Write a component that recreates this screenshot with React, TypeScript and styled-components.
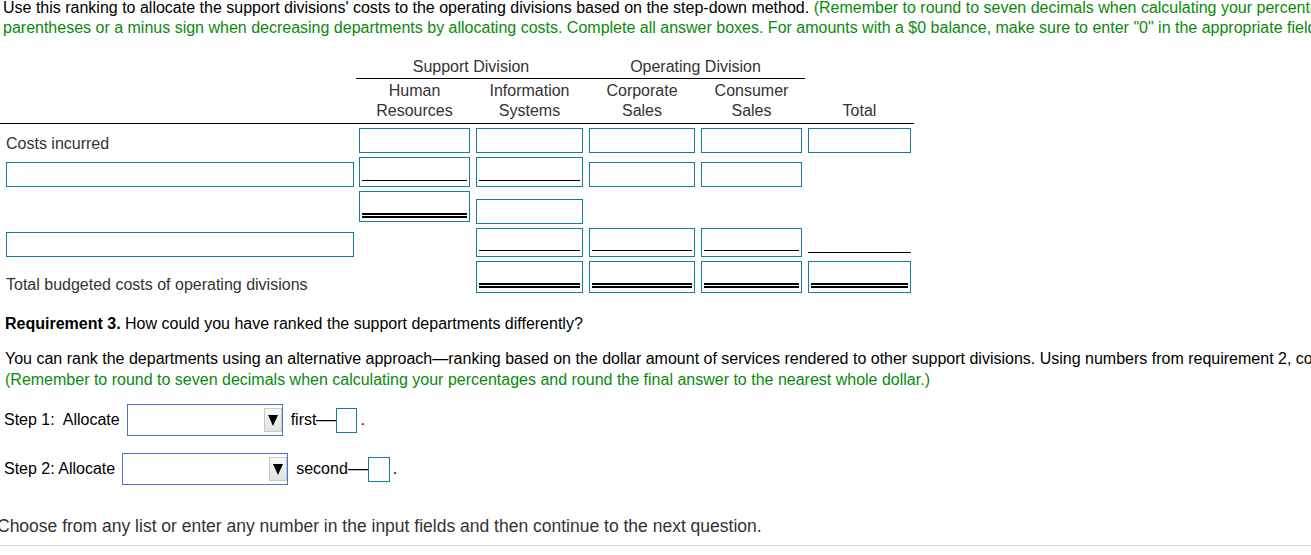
import React from 'react';
import styled, { createGlobalStyle } from 'styled-components';

const teal = '#147d99';
const cols = '356px 117px 113px 112px 107px 109px';

const GlobalStyle = createGlobalStyle`
  html, body {
    margin: 0;
    padding: 0;
    background: #fff;
    overflow: hidden;
  }
  body {
    font-family: 'Liberation Sans', Arial, sans-serif;
    font-size: 16px;
    color: #000;
  }
`;

const Page = styled.div`
  width: 1311px;
  height: 555px;
  overflow: hidden;
`;

const Intro = styled.p`
  margin: -2px 0 0;
  padding-left: 3px;
  line-height: 20px;
  white-space: nowrap;
`;

const Green = styled.span`
  color: #0a8a0a;
`;

const Sheet = styled.div`
  width: 914px;
  margin-top: 19px;
  color: #333;
`;

const HeadTop = styled.div`
  display: grid;
  grid-template-columns: ${cols};
`;

const GroupHead = styled.div`
  grid-column: span 2;
  text-align: center;
  line-height: 20px;
  padding-bottom: 1px;
  border-bottom: 1px solid #000;
`;

const HeadBottom = styled.div`
  display: grid;
  grid-template-columns: ${cols};
  align-items: end;
  padding: 2px 0 2px;
  border-bottom: 1px solid #000;
`;

const ColHead = styled.div`
  text-align: center;
  line-height: 20px;
`;

const Body = styled.div`
  display: grid;
  grid-template-columns: ${cols};
  row-gap: 4px;
  align-items: end;
  padding-top: 4px;
`;

const Cell = styled.div<{ $wide?: boolean }>`
  padding: ${(p) => (p.$wide ? '0 2px 0 6px' : '0 3px')};
`;

const RowLabel = styled.div<{ $drop: number }>`
  padding-left: 6px;
  margin-bottom: -${(p) => p.$drop}px;
  line-height: 20px;
  white-space: nowrap;
`;

const Field = styled.div<{ $h?: number; $pb?: number; $mb?: number }>`
  box-sizing: border-box;
  height: ${(p) => p.$h ?? 25}px;
  margin-bottom: ${(p) => p.$mb ?? 0}px;
  border: 1px solid ${teal};
  background: #fff;
  display: flex;
  flex-direction: column;
  justify-content: flex-end;
  padding: 0 2px ${(p) => p.$pb ?? 0}px;
`;

const Rule = styled.div<{ $double?: boolean }>`
  box-sizing: content-box;
  height: ${(p) => (p.$double ? '1px' : '0')};
  border-top: ${(p) => (p.$double ? '2px' : '1px')} solid #000;
  border-bottom: ${(p) => (p.$double ? '2px solid #000' : 'none')};
`;

const BareRule = styled.div`
  border-top: 1px solid #000;
  margin: 0 0 4px;
`;

const Requirement = styled.p`
  margin: 21px 0 0;
  padding-left: 5px;
  line-height: 20px;
  b {
    font-weight: bold;
  }
`;

const Explain = styled.p`
  margin: 14px 0 0;
  padding-left: 5px;
  line-height: 21px;
  white-space: nowrap;
`;

const StepRow = styled.div<{ $mt: number }>`
  display: flex;
  align-items: center;
  margin-top: ${(p) => p.$mt}px;
  padding-left: 4px;
  line-height: 20px;
  white-space: pre;
`;

const Dropdown = styled.div<{ $w: number }>`
  box-sizing: border-box;
  width: ${(p) => p.$w}px;
  height: 32px;
  margin: 0 8px 0 7px;
  border: 1px solid #4a72c9;
  background: #fff;
  display: flex;
  align-items: center;
  justify-content: flex-end;
`;

const DropButton = styled.span`
  box-sizing: border-box;
  width: 18px;
  height: 24px;
  border: 1px solid #c8c8c8;
  background: linear-gradient(#f8f8f8, #e3e3e3);
  display: flex;
  align-items: center;
  justify-content: center;
`;

const Arrow = styled.span`
  width: 0;
  height: 0;
  border-left: 5px solid transparent;
  border-right: 5px solid transparent;
  border-top: 11px solid #000;
`;

const Dash = styled.span`
  display: inline-block;
  transform: scaleX(1.25);
  transform-origin: left center;
  margin-right: 4px;
`;

const SmallBox = styled.span<{ $w: number }>`
  box-sizing: border-box;
  width: ${(p) => p.$w}px;
  height: 25px;
  border: 1px solid ${teal};
  margin-right: 3px;
`;

const Footer = styled.div`
  margin-top: 31px;
  margin-left: -3px;
  padding-bottom: 9px;
  font-size: 17.5px;
  line-height: 20px;
  color: #333;
  border-bottom: 1px solid #d3d3dc;
`;

const Empty = () => <div />;

export default function App() {
  return (
    <Page>
      <GlobalStyle />
      <Intro>
        Use this ranking to allocate the support divisions' costs to the operating divisions based on the step-down
        method.{' '}
        <Green>
          (Remember to round to seven decimals when calculating your percentages. Enter a decrease in
          <br />
          parentheses or a minus sign when decreasing departments by allocating costs. Complete all answer boxes. For
          amounts with a $0 balance, make sure to enter "0" in the appropriate field.)
        </Green>
      </Intro>

      <Sheet>
        <HeadTop>
          <Empty />
          <GroupHead>Support Division</GroupHead>
          <GroupHead>Operating Division</GroupHead>
          <Empty />
        </HeadTop>
        <HeadBottom>
          <Empty />
          <ColHead>
            Human
            <br />
            Resources
          </ColHead>
          <ColHead>
            Information
            <br />
            Systems
          </ColHead>
          <ColHead>
            Corporate
            <br />
            Sales
          </ColHead>
          <ColHead>
            Consumer
            <br />
            Sales
          </ColHead>
          <ColHead>Total</ColHead>
        </HeadBottom>

        <Body>
          {/* costs incurred */}
          <RowLabel $drop={1}>Costs incurred</RowLabel>
          <Cell><Field /></Cell>
          <Cell><Field /></Cell>
          <Cell><Field /></Cell>
          <Cell><Field /></Cell>
          <Cell><Field /></Cell>

          {/* allocation of first division */}
          <Cell $wide><Field /></Cell>
          <Cell><Field $h={30} $pb={5}><Rule /></Field></Cell>
          <Cell><Field $h={30} $pb={5}><Rule /></Field></Cell>
          <Cell><Field /></Cell>
          <Cell><Field /></Cell>
          <Empty />

          <Empty />
          <Cell><Field $h={31} $pb={3} $mb={2}><Rule $double /></Field></Cell>
          <Cell><Field /></Cell>
          <Empty />
          <Empty />
          <Empty />

          {/* allocation of second division */}
          <Cell $wide><Field /></Cell>
          <Empty />
          <Cell><Field $h={29} $pb={5}><Rule /></Field></Cell>
          <Cell><Field $h={29} $pb={5}><Rule /></Field></Cell>
          <Cell><Field $h={29} $pb={5}><Rule /></Field></Cell>
          <Cell><BareRule /></Cell>

          <RowLabel $drop={2}>Total budgeted costs of operating divisions</RowLabel>
          <Empty />
          <Cell><Field $h={32} $pb={4}><Rule $double /></Field></Cell>
          <Cell><Field $h={32} $pb={4}><Rule $double /></Field></Cell>
          <Cell><Field $h={32} $pb={4}><Rule $double /></Field></Cell>
          <Cell><Field $h={32} $pb={4}><Rule $double /></Field></Cell>
        </Body>
      </Sheet>

      <Requirement>
        <b>Requirement 3.</b> How could you have ranked the support departments differently?
      </Requirement>

      <Explain>
        You can rank the departments using an alternative approach—ranking based on the dollar amount of services
        rendered to other support divisions. Using numbers from requirement 2, complete the allocation below.
        <br />
        <Green>
          (Remember to round to seven decimals when calculating your percentages and round the final answer to the
          nearest whole dollar.)
        </Green>
      </Explain>

      <StepRow $mt={14}>
        {'Step 1:  Allocate'}
        <Dropdown $w={156}>
          <DropButton>
            <Arrow />
          </DropButton>
        </Dropdown>
        first
        <Dash>—</Dash>
        <SmallBox $w={21} />.
      </StepRow>

      <StepRow $mt={17}>
        {'Step 2: Allocate'}
        <Dropdown $w={166}>
          <DropButton>
            <Arrow />
          </DropButton>
        </Dropdown>
        second
        <Dash>—</Dash>
        <SmallBox $w={22} />.
      </StepRow>

      <Footer>Choose from any list or enter any number in the input fields and then continue to the next question.</Footer>
    </Page>
  );
}
